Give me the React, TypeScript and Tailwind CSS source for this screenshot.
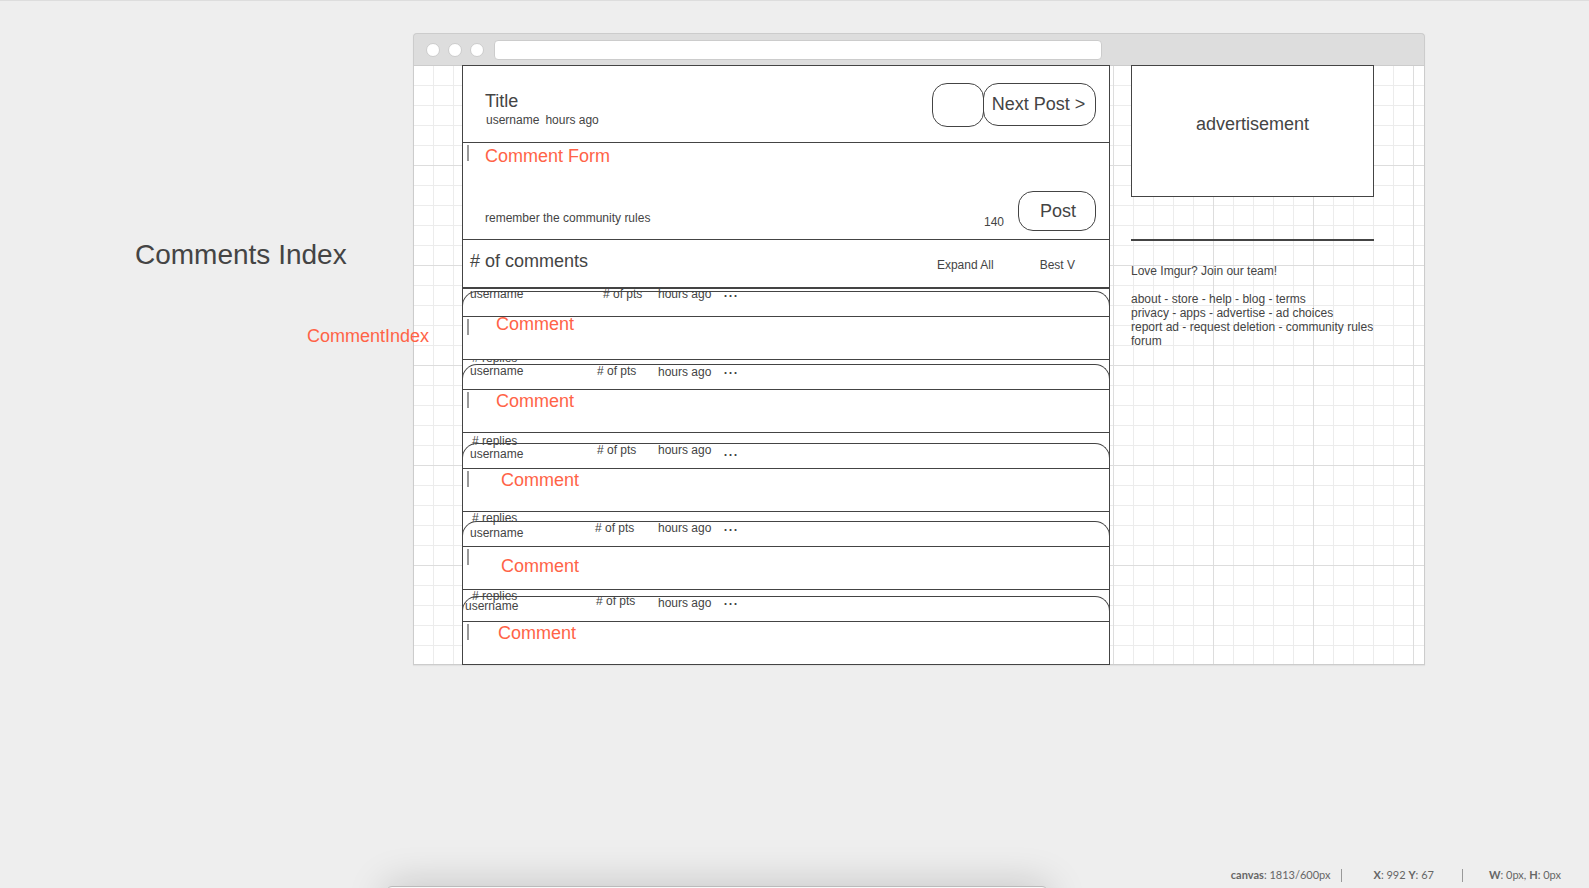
type Comment = {
  id: number;
  gap: string;
  username: string;
  points: string;
  age: string;
  more: string;
  body: string;
  replies?: string;
};

const comments: Comment[] = [
  { id: 1, gap: "mt-0.5", username: "left-2 -top-[5px]", points: "left-[141px] -top-[5px]", age: "-top-[5px]", more: "-top-[11px]", body: "pl-[33px] -top-[3px]", replies: "top-[60px]" },
  { id: 2, gap: "mt-1", username: "left-2 -top-px", points: "left-[135px] -top-px", age: "top-0", more: "-top-[7px]", body: "pl-[33px] top-px", replies: "top-[70px]" },
  { id: 3, gap: "mt-2.5", username: "left-2 top-[3px]", points: "left-[135px] -top-px", age: "-top-px", more: "-top-1", body: "pl-[38px] top-px", replies: "top-[68px]" },
  { id: 4, gap: "mt-[9px]", username: "left-2 top-1", points: "left-[133px] -top-px", age: "-top-px", more: "-top-[7px]", body: "pl-[38px] top-[9px]", replies: "top-[68px]" },
  { id: 5, gap: "mt-1.5", username: "left-[3px] top-0.5", points: "left-[134px] -top-[3px]", age: "-top-px", more: "-top-2", body: "pl-[35px] top-px" },
];

const footerRows = [
  ["about", "store", "help", "blog", "terms"],
  ["privacy", "apps", "advertise", "ad choices"],
  ["report ad", "request deletion", "community rules"],
  ["forum"],
];

function Caret() {
  return <span className="absolute left-1 top-0.5 h-4 w-0.5 bg-[#999]" />;
}

function CommentCard({ comment }: { comment: Comment }) {
  return (
    <li className={`relative ${comment.gap}`}>
      {comment.replies && (
        <a href="#replies" className={`absolute left-2.5 ${comment.replies}`}>
          # replies
        </a>
      )}
      <div className="relative h-[25px] rounded-t-[15px] border border-b-0 border-[#444]">
        <a href="#user" className={`absolute -ml-px ${comment.username}`}>username</a>
        <span className={`absolute -ml-px ${comment.points}`}># of pts</span>
        <span className={`absolute left-[195px] ${comment.age}`}>hours ago</span>
        <button type="button" aria-label="More" className={`absolute left-[260px] text-lg/5 ${comment.more}`}>...</button>
      </div>
      <div className="relative h-11 border border-[#444] bg-white">
        <Caret />
        <p className={`relative text-lg/5 text-[#ff6347] ${comment.body}`}>Comment</p>
      </div>
    </li>
  );
}

function Thread() {
  return (
    <main className="ml-[49px] min-w-0 flex-1 border border-[#444] bg-white">
      <header className="flex h-[77px] items-start justify-between border-b border-[#444] pl-[22px] pr-[13px]">
        <div className="pt-[25px]">
          <h2 className="text-lg/5">Title</h2>
          <p className="mt-0.5 flex gap-1.5 pl-px">
            <a href="#user">username</a>
            <span>hours ago</span>
          </p>
        </div>
        <div className="flex items-start pt-[17px]">
          <button type="button" aria-label="Previous post" className="h-11 w-[52px] rounded-[15px] border border-[#444]" />
          <button type="button" className="-ml-px h-[43px] w-[113px] whitespace-nowrap rounded-[15px] border border-[#444] pb-0.5 pr-0.5 text-lg/5">
            Next Post &gt;
          </button>
        </div>
      </header>

      <form className="relative h-[97px] border-b border-[#444]" onSubmit={(e) => e.preventDefault()}>
        <Caret />
        <textarea
          aria-label="Comment Form"
          placeholder="Comment Form"
          className="block h-12 w-full resize-none pl-[22px] pt-[3px] text-lg/5 outline-none placeholder:text-[#ff6347] placeholder:opacity-100"
        />
        <div className="flex pl-[22px] pr-[13px]">
          <p className="flex-1 pt-5">remember the community rules</p>
          <output className="pr-3.5 pt-6">140</output>
          <button type="submit" className="h-10 w-[78px] rounded-[15px] border border-[#444] pl-0.5 text-lg/5">Post</button>
        </div>
      </form>

      <div className="flex h-[49px] items-start border-b-2 border-[#444] pl-[7px] pr-[34px]">
        <h3 className="flex-1 pt-[11px] text-lg/5"># of comments</h3>
        <button type="button" className="mr-[46px] pt-[18px]">Expand All</button>
        <button type="button" className="pt-[18px]">Best V</button>
      </div>

      <ul className="-mx-px -mb-px">
        {comments.map((comment) => (
          <CommentCard key={comment.id} comment={comment} />
        ))}
      </ul>
    </main>
  );
}

function Sidebar() {
  return (
    <aside className="ml-[21px] mr-[51px] w-[243px]">
      <div className="flex h-[132px] items-center justify-center border border-[#444] bg-white pb-3.5 text-lg/5">
        advertisement
      </div>
      <hr className="mt-[42px] border-t-2 border-[#444]" />
      <a href="#jobs" className="mt-[23px] block">Love Imgur? Join our team!</a>
      <nav className="mt-3.5 whitespace-nowrap">
        {footerRows.map((row) => (
          <div key={row[0]}>
            {row.map((name, i) => (
              <span key={name}>
                {i > 0 && " - "}
                <a href="#footer">{name}</a>
              </span>
            ))}
          </div>
        ))}
      </nav>
    </aside>
  );
}

function BrowserWindow() {
  return (
    <section className="relative min-w-0 shadow-[0_1px_1px_rgba(0,0,0,0.05)]">
      <div className="flex h-8 items-center rounded-t border border-b-0 border-[#ccc] bg-[#ddd] pl-3 pt-px">
        <div className="mr-2.5 flex gap-2">
          <span className="size-3.5 rounded-full border border-[#ccc] bg-white" />
          <span className="size-3.5 rounded-full border border-[#ccc] bg-white" />
          <span className="size-3.5 rounded-full border border-[#ccc] bg-white" />
        </div>
        <input
          aria-label="Address"
          className="mr-[322px] h-5 min-w-0 flex-1 rounded border border-[#ccc] bg-white px-2 outline-none"
        />
      </div>
      <div className="relative">
        <div className="absolute inset-0 border border-[#ccc] bg-white bg-[linear-gradient(to_right,#ddd_1px,transparent_1px),linear-gradient(to_bottom,#ddd_1px,transparent_1px),linear-gradient(to_right,#ececec_1px,transparent_1px),linear-gradient(to_bottom,#ececec_1px,transparent_1px)] bg-[size:100px_100px,100px_100px,20px_20px,20px_20px] bg-origin-border" />
        <div className="relative flex">
          <Thread />
          <Sidebar />
        </div>
      </div>
    </section>
  );
}

function StatusBar() {
  return (
    <footer className="absolute bottom-1.5 right-7 flex items-center font-[Lato,sans-serif] text-[11px]/[14px] text-[#666]">
      <span><b>canvas</b>: 1813/600px</span>
      <span className="ml-2.5 mr-8 h-[13px] w-px bg-[#999]" />
      <span><b>X</b>: 992 <b>Y</b>: 67</span>
      <span className="ml-7 mr-[26px] h-[13px] w-px bg-[#999]" />
      <span><b>W</b>: 0px, <b>H</b>: 0px</span>
    </footer>
  );
}

export default function App() {
  return (
    <div className="relative min-h-screen overflow-hidden border-t border-[#ddd] bg-[#eee] font-['Liberation_Sans',Arial,sans-serif] text-xs/[14px] text-[#444]">
      <div className="grid grid-cols-[413px_minmax(0,1fr)_164px] pt-8">
        <div className="relative z-10 whitespace-nowrap pt-[206px]">
          <h1 className="pl-[135px] text-[28px]/[32px]">Comments Index</h1>
          <p className="pl-[307px] pt-[55px] text-lg/5 text-[#ff6347]">CommentIndex</p>
        </div>
        <BrowserWindow />
      </div>
      <div className="absolute -bottom-8 left-[386px] h-[34px] w-[662px] rounded-md border border-[#bbb] bg-[#fafafa] shadow-[0_0_40px_rgba(0,0,0,0.2)]" />
      <StatusBar />
    </div>
  );
}
